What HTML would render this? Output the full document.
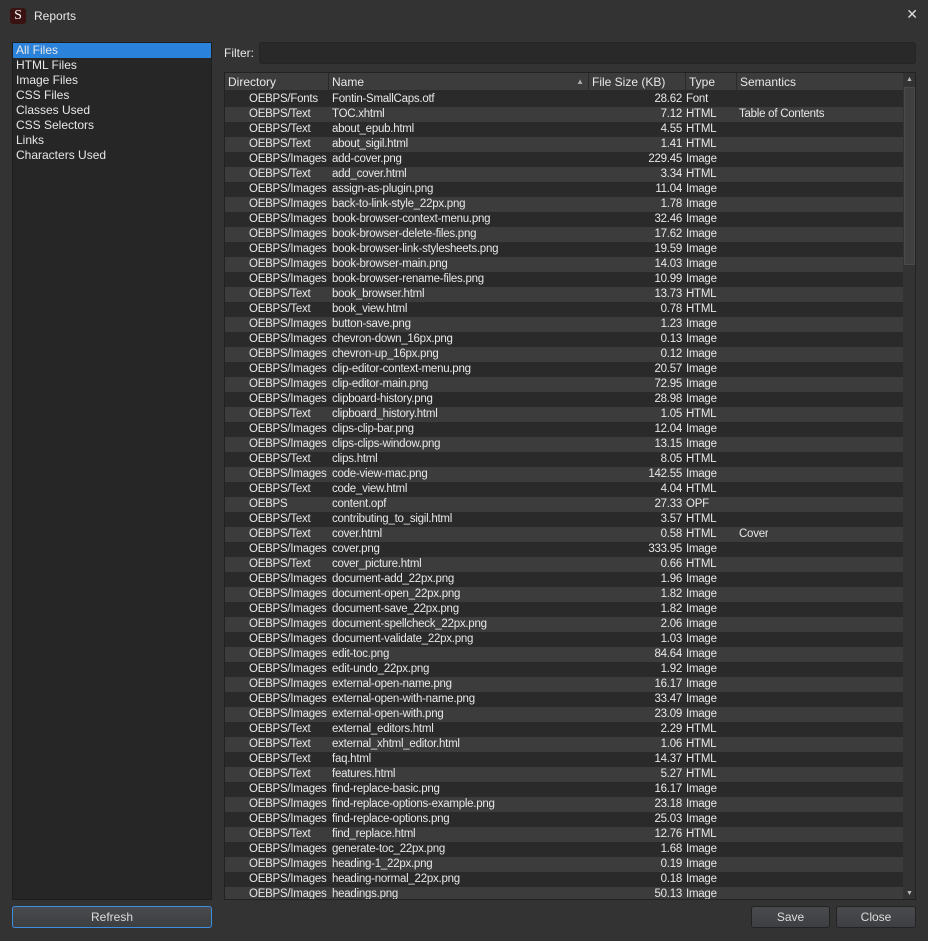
<!DOCTYPE html>
<html><head><meta charset="utf-8"><style>
*{margin:0;padding:0;box-sizing:border-box}
body{width:928px;height:941px;background:#333334;font-family:"Liberation Sans",sans-serif;font-size:12px;color:#e8e8e8;position:relative;overflow:hidden}
.title{position:absolute;left:10px;top:7px;height:18px;display:flex;align-items:center}
.logo{width:16px;height:16px;background:#3a1212;border-radius:3px;color:#fff;font-family:"Liberation Serif",serif;font-size:14px;text-align:center;line-height:16px;margin-right:8px}
.x{position:absolute;right:10px;top:6px;font-size:14px;color:#ddd}
.left{position:absolute;left:12px;top:42px;width:200px;height:858px;background:#262626;border:1px solid #1e1e1e}
.left div{height:15px;line-height:15px;padding-left:3px}
.left .sel{background:#2b82da}
.filterl{position:absolute;left:224px;top:46px}
.filter{position:absolute;left:259px;top:42px;width:657px;height:22px;background:#292929;border-radius:3px;border:1px solid #252525}
.table{position:absolute;left:224px;top:72px;width:692px;height:828px;background:#2a2a2a;border:1px solid #222;overflow:hidden}
.hdr{position:absolute;left:0;top:0;height:18px;width:678px;background:#3c3c3c;display:flex}
.hdr div{border-right:1px solid #2a2a2a;padding-left:3px;line-height:18px;border-bottom:1px solid #2a2a2a}
.rows{position:absolute;left:0;top:19px;width:678px;font-size:11.5px;letter-spacing:-0.25px}
.r{height:15px;line-height:15px;display:flex;white-space:nowrap}
.r span{overflow:hidden}
.r:nth-child(even){background:#3c3c3c}
.r span:nth-child(1){width:103px;padding-left:24px}
.r span:nth-child(2){width:260px;padding-left:4px}
.r span:nth-child(3){width:94px;text-align:right}
.r span:nth-child(4){width:54px;padding-left:4px}
.r span:nth-child(5){padding-left:3px}
.sb{position:absolute;left:678px;top:0;width:13px;height:826px;background:#333}
.thumb{position:absolute;left:1px;top:14px;width:11px;height:178px;background:#404040;border:1px solid #4a4a4a}
.btn{position:absolute;height:22px;border:1px solid #222;border-radius:3px;background:linear-gradient(#484a4d,#3d3f42);text-align:center;line-height:20px;color:#ddd}
</style></head><body>
<div class="title"><div class="logo">S</div>Reports</div>
<div class="x">✕</div>
<div class="left"><div class="sel">All Files</div><div>HTML Files</div><div>Image Files</div><div>CSS Files</div><div>Classes Used</div><div>CSS Selectors</div><div>Links</div><div>Characters Used</div></div>
<div class="filterl">Filter:</div><div class="filter"></div>
<div class="table">
<div class="hdr"><div style="width:104px">Directory</div><div style="width:260px">Name <span style="float:right;margin-right:4px;font-size:8px;color:#aaa">▲</span></div><div style="width:97px">File Size (KB)</div><div style="width:51px">Type</div><div style="flex:1;border-right:none">Semantics</div></div>
<div class="rows">
<div class="r"><span>OEBPS/Fonts</span><span>Fontin-SmallCaps.otf</span><span>28.62</span><span>Font</span><span></span></div>
<div class="r"><span>OEBPS/Text</span><span>TOC.xhtml</span><span>7.12</span><span>HTML</span><span>Table of Contents</span></div>
<div class="r"><span>OEBPS/Text</span><span>about_epub.html</span><span>4.55</span><span>HTML</span><span></span></div>
<div class="r"><span>OEBPS/Text</span><span>about_sigil.html</span><span>1.41</span><span>HTML</span><span></span></div>
<div class="r"><span>OEBPS/Images</span><span>add-cover.png</span><span>229.45</span><span>Image</span><span></span></div>
<div class="r"><span>OEBPS/Text</span><span>add_cover.html</span><span>3.34</span><span>HTML</span><span></span></div>
<div class="r"><span>OEBPS/Images</span><span>assign-as-plugin.png</span><span>11.04</span><span>Image</span><span></span></div>
<div class="r"><span>OEBPS/Images</span><span>back-to-link-style_22px.png</span><span>1.78</span><span>Image</span><span></span></div>
<div class="r"><span>OEBPS/Images</span><span>book-browser-context-menu.png</span><span>32.46</span><span>Image</span><span></span></div>
<div class="r"><span>OEBPS/Images</span><span>book-browser-delete-files.png</span><span>17.62</span><span>Image</span><span></span></div>
<div class="r"><span>OEBPS/Images</span><span>book-browser-link-stylesheets.png</span><span>19.59</span><span>Image</span><span></span></div>
<div class="r"><span>OEBPS/Images</span><span>book-browser-main.png</span><span>14.03</span><span>Image</span><span></span></div>
<div class="r"><span>OEBPS/Images</span><span>book-browser-rename-files.png</span><span>10.99</span><span>Image</span><span></span></div>
<div class="r"><span>OEBPS/Text</span><span>book_browser.html</span><span>13.73</span><span>HTML</span><span></span></div>
<div class="r"><span>OEBPS/Text</span><span>book_view.html</span><span>0.78</span><span>HTML</span><span></span></div>
<div class="r"><span>OEBPS/Images</span><span>button-save.png</span><span>1.23</span><span>Image</span><span></span></div>
<div class="r"><span>OEBPS/Images</span><span>chevron-down_16px.png</span><span>0.13</span><span>Image</span><span></span></div>
<div class="r"><span>OEBPS/Images</span><span>chevron-up_16px.png</span><span>0.12</span><span>Image</span><span></span></div>
<div class="r"><span>OEBPS/Images</span><span>clip-editor-context-menu.png</span><span>20.57</span><span>Image</span><span></span></div>
<div class="r"><span>OEBPS/Images</span><span>clip-editor-main.png</span><span>72.95</span><span>Image</span><span></span></div>
<div class="r"><span>OEBPS/Images</span><span>clipboard-history.png</span><span>28.98</span><span>Image</span><span></span></div>
<div class="r"><span>OEBPS/Text</span><span>clipboard_history.html</span><span>1.05</span><span>HTML</span><span></span></div>
<div class="r"><span>OEBPS/Images</span><span>clips-clip-bar.png</span><span>12.04</span><span>Image</span><span></span></div>
<div class="r"><span>OEBPS/Images</span><span>clips-clips-window.png</span><span>13.15</span><span>Image</span><span></span></div>
<div class="r"><span>OEBPS/Text</span><span>clips.html</span><span>8.05</span><span>HTML</span><span></span></div>
<div class="r"><span>OEBPS/Images</span><span>code-view-mac.png</span><span>142.55</span><span>Image</span><span></span></div>
<div class="r"><span>OEBPS/Text</span><span>code_view.html</span><span>4.04</span><span>HTML</span><span></span></div>
<div class="r"><span>OEBPS</span><span>content.opf</span><span>27.33</span><span>OPF</span><span></span></div>
<div class="r"><span>OEBPS/Text</span><span>contributing_to_sigil.html</span><span>3.57</span><span>HTML</span><span></span></div>
<div class="r"><span>OEBPS/Text</span><span>cover.html</span><span>0.58</span><span>HTML</span><span>Cover</span></div>
<div class="r"><span>OEBPS/Images</span><span>cover.png</span><span>333.95</span><span>Image</span><span></span></div>
<div class="r"><span>OEBPS/Text</span><span>cover_picture.html</span><span>0.66</span><span>HTML</span><span></span></div>
<div class="r"><span>OEBPS/Images</span><span>document-add_22px.png</span><span>1.96</span><span>Image</span><span></span></div>
<div class="r"><span>OEBPS/Images</span><span>document-open_22px.png</span><span>1.82</span><span>Image</span><span></span></div>
<div class="r"><span>OEBPS/Images</span><span>document-save_22px.png</span><span>1.82</span><span>Image</span><span></span></div>
<div class="r"><span>OEBPS/Images</span><span>document-spellcheck_22px.png</span><span>2.06</span><span>Image</span><span></span></div>
<div class="r"><span>OEBPS/Images</span><span>document-validate_22px.png</span><span>1.03</span><span>Image</span><span></span></div>
<div class="r"><span>OEBPS/Images</span><span>edit-toc.png</span><span>84.64</span><span>Image</span><span></span></div>
<div class="r"><span>OEBPS/Images</span><span>edit-undo_22px.png</span><span>1.92</span><span>Image</span><span></span></div>
<div class="r"><span>OEBPS/Images</span><span>external-open-name.png</span><span>16.17</span><span>Image</span><span></span></div>
<div class="r"><span>OEBPS/Images</span><span>external-open-with-name.png</span><span>33.47</span><span>Image</span><span></span></div>
<div class="r"><span>OEBPS/Images</span><span>external-open-with.png</span><span>23.09</span><span>Image</span><span></span></div>
<div class="r"><span>OEBPS/Text</span><span>external_editors.html</span><span>2.29</span><span>HTML</span><span></span></div>
<div class="r"><span>OEBPS/Text</span><span>external_xhtml_editor.html</span><span>1.06</span><span>HTML</span><span></span></div>
<div class="r"><span>OEBPS/Text</span><span>faq.html</span><span>14.37</span><span>HTML</span><span></span></div>
<div class="r"><span>OEBPS/Text</span><span>features.html</span><span>5.27</span><span>HTML</span><span></span></div>
<div class="r"><span>OEBPS/Images</span><span>find-replace-basic.png</span><span>16.17</span><span>Image</span><span></span></div>
<div class="r"><span>OEBPS/Images</span><span>find-replace-options-example.png</span><span>23.18</span><span>Image</span><span></span></div>
<div class="r"><span>OEBPS/Images</span><span>find-replace-options.png</span><span>25.03</span><span>Image</span><span></span></div>
<div class="r"><span>OEBPS/Text</span><span>find_replace.html</span><span>12.76</span><span>HTML</span><span></span></div>
<div class="r"><span>OEBPS/Images</span><span>generate-toc_22px.png</span><span>1.68</span><span>Image</span><span></span></div>
<div class="r"><span>OEBPS/Images</span><span>heading-1_22px.png</span><span>0.19</span><span>Image</span><span></span></div>
<div class="r"><span>OEBPS/Images</span><span>heading-normal_22px.png</span><span>0.18</span><span>Image</span><span></span></div>
<div class="r"><span>OEBPS/Images</span><span>headings.png</span><span>50.13</span><span>Image</span><span></span></div>
</div>
<div class="sb"><div style="position:absolute;left:3px;top:3px;font-size:7px;color:#bbb">▲</div><div class="thumb"></div><div style="position:absolute;left:3px;bottom:2px;font-size:7px;color:#bbb">▼</div></div>
</div>
<div class="btn" style="left:12px;top:906px;width:200px;border-color:#3d8fe0">Refresh</div>
<div class="btn" style="left:751px;top:906px;width:79px">Save</div>
<div class="btn" style="left:836px;top:906px;width:80px">Close</div>
</body></html>
